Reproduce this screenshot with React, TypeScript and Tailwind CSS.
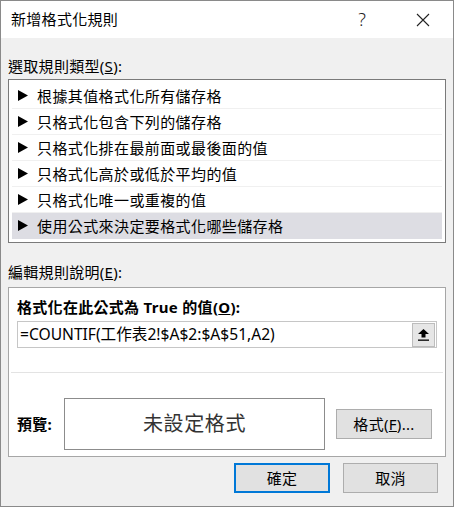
import React from 'react'

const font = { fontFamily: '"Noto Sans", "Noto Sans CJK TC", sans-serif' }

const rules = [
  '根據其值格式化所有儲存格',
  '只格式化包含下列的儲存格',
  '只格式化排在最前面或最後面的值',
  '只格式化高於或低於平均的值',
  '只格式化唯一或重複的值',
  '使用公式來決定要格式化哪些儲存格',
]

function Arrow() {
  return (
    <svg width="10" height="11" viewBox="0 0 10 11" className="shrink-0">
      <polygon points="0,0 10,5.5 0,11" fill="#000" />
    </svg>
  )
}

export default function App() {
  return (
    <div
      className="w-[454px] h-[507px] border border-[#8a8a8a] flex flex-col text-black"
      style={font}
    >
      {/* title bar */}
      <div className="h-[37px] bg-white flex items-center pl-[10px] shrink-0">
        <span className="text-[15px] tracking-[0.3px]">新增格式化規則</span>
        <span className="ml-auto text-[18px] font-light text-[#222] mr-[50px]">?</span>
        <svg width="14" height="14" viewBox="0 0 14 14" className="mr-[23px]">
          <path d="M1 1 L13 13 M13 1 L1 13" stroke="#222" strokeWidth="1.1" />
        </svg>
      </div>

      {/* body */}
      <div className="flex-1 bg-[#f0f0f0] px-[7px] flex flex-col">
        <div className="pt-[18px] h-[38px] text-[15px] leading-[20px] tracking-[0.3px]">
          選取規則類型(<span className="underline">S</span>):
        </div>

        <div className="mt-[3px] border border-[#7a7a7a] bg-white p-[2px]">
          <div className="border border-white">
            {rules.map((r, i) => (
              <div
                key={i}
                className={
                  'h-[26px] flex items-center gap-[9px] pl-[6px] border-b ' +
                  (i === rules.length - 1
                    ? 'bg-[#dddde3] border-transparent'
                    : 'border-[#f0f0f0]')
                }
              >
                <Arrow />
                <span className="text-[15px] leading-[20px] tracking-[0.4px]">{r}</span>
              </div>
            ))}
          </div>
        </div>

        <div className="mt-[19px] text-[15px] leading-[20px] tracking-[0.3px]">
          編輯規則說明(<span className="underline">E</span>):
        </div>

        <div className="mt-[5px] border border-[#a6a6a6] bg-white">
          <div className="px-[8px] pt-[9px] pb-[24px]">
            <div className="text-[15px] leading-[20px] font-bold tracking-[0.3px]">
              格式化在此公式為 True 的值(<span className="underline">O</span>):
            </div>
            <div className="mt-[4px] h-[27px] border border-[#c6c6c6] flex items-center pl-[2px] pr-[1px]">
              <span className="text-[15.6px]">=COUNTIF(工作表2!$A$2:$A$51,A2)</span>
              <div className="ml-auto w-[23px] h-[24px] bg-[#e6e6e6] border border-[#bdbdbd] flex items-center justify-center">
                <svg width="11" height="12" viewBox="0 0 11 12">
                  <polygon points="5.5,0 11,5 7.5,5 7.5,8.5 3.5,8.5 3.5,5 0,5" fill="#000" />
                  <rect x="0" y="10.5" width="11" height="1.3" fill="#000" />
                </svg>
              </div>
            </div>
          </div>
          <div className="mx-[2px] h-px bg-[#e3e3e3]" />
          <div className="flex items-center pl-[8px] pt-[25px] pb-[6px]">
            <div className="w-[47px] text-[15px] font-bold tracking-[0.3px]">預覽:</div>
            <div className="w-[261px] h-[52px] border border-[#8c8c8c] flex items-center justify-center">
              <span className="text-[20px] text-[#333] tracking-[0.6px]">未設定格式</span>
            </div>
            <button className="ml-[11px] w-[96px] h-[30px] bg-[#e1e1e1] border border-[#adadad] text-[15px] tracking-[0.3px]">
              格式(<span className="underline">F</span>)...
            </button>
          </div>
        </div>

        <div className="mt-[6px] flex justify-end gap-[13px] pr-[8px]">
          <button className="w-[96px] h-[30px] bg-[#e1e1e1] border-2 border-[#0078d7] text-[15px] tracking-[0.3px]">
            確定
          </button>
          <button className="w-[95px] h-[30px] bg-[#e1e1e1] border border-[#adadad] text-[15px] tracking-[0.3px]">
            取消
          </button>
        </div>
      </div>
    </div>
  )
}
